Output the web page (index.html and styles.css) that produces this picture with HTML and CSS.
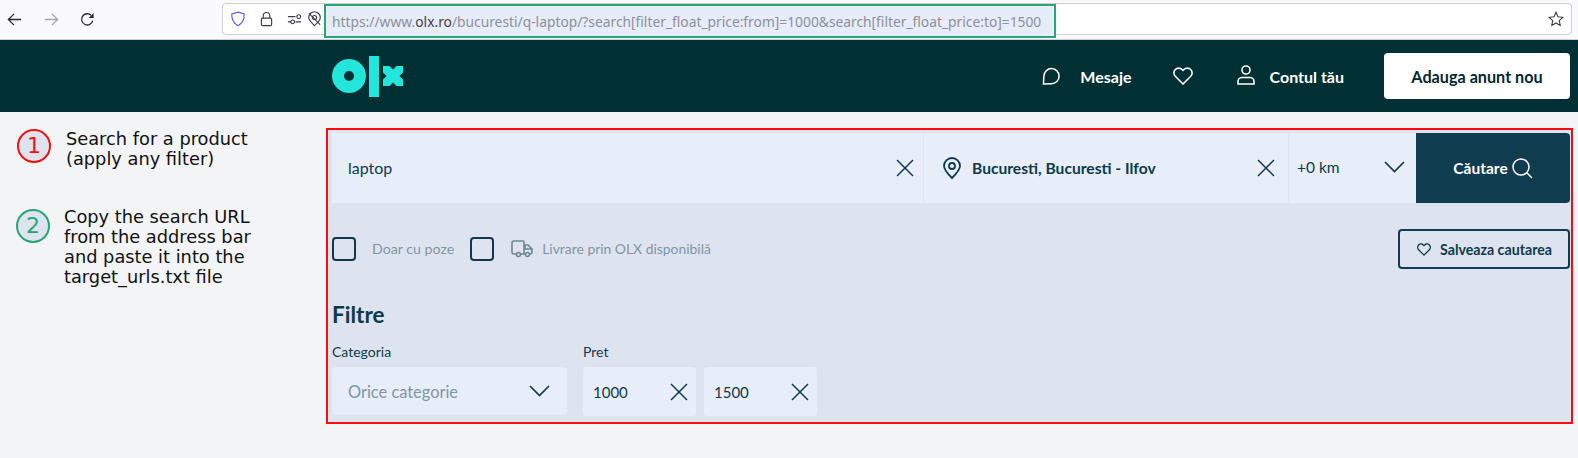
FILE: index.html
```html
<!DOCTYPE html>
<html lang="ro">
<head>
<meta charset="utf-8">
<title>OLX search</title>
<link rel="stylesheet" href="styles.css">
</head>
<body>
<div class="toolbar">
  <div class="nav">
    <svg class="nav-icon" viewBox="0 0 16 16"><path d="M15 8H1.500M7.500 2 1.500 8l6 6"/></svg>
    <svg class="nav-icon off" viewBox="0 0 16 16"><path d="M1 8h13.500M8.500 2l6 6-6 6"/></svg>
    <svg class="nav-icon" viewBox="0 0 16 16"><path d="M13.600 9.200A6 6 0 1 1 12 3.600"/><path class="solid" d="M14.500 1v5.400H9.200z"/></svg>
  </div>
  <div class="address">
    <div class="addr-icons">
      <svg class="ai shield" viewBox="0 0 16 16"><path d="M8 1.200 14.200 3c.2 5.600-2 9.500-6.200 11.800C3.800 12.500 1.600 8.600 1.800 3z"/></svg>
      <svg class="ai lock" viewBox="0 0 16 16"><path d="M4.500 7V4.500a3.500 3.500 0 0 1 7 0V7"/><rect x="2.500" y="7" width="11" height="8" rx="1.500"/></svg>
      <svg class="ai perm" viewBox="0 0 16 16"><path d="M1 5.500h8M1 11h3M9 11h6"/><circle cx="12.500" cy="5.500" r="2"/><circle cx="6" cy="11" r="2"/></svg>
      <svg class="ai pin" viewBox="0 0 16 16"><path d="M8 15C4 11.500 1.800 8.800 1.800 6.500a6.200 6.200 0 0 1 12.400 0C14.200 8.800 12 11.500 8 15z"/><circle cx="8" cy="6.500" r="2.200"/><path d="M2 2l12 12"/></svg>
    </div>
    <div class="url">https://www.<b>olx.ro</b>/bucuresti/q-laptop/?search[filter_float_price:from]=1000&amp;search[filter_float_price:to]=1500</div>
    <svg class="star" viewBox="0 0 16 16"><path d="M8 1.300l2 4.400 4.800.6-3.500 3.300.9 4.800L8 12l-4.200 2.400.9-4.800L1.200 6.300 6 5.700z"/></svg>
  </div>
</div>

<header class="site-header">
  <svg class="logo" viewBox="0 0 71 41"><path class="logo-o" fill-rule="evenodd" d="M17 3a17 17 0 1 0 0 34 17 17 0 0 0 0-34zm0 12a5 5 0 1 1 0 10 5 5 0 0 1 0-10z"/><rect class="logo-o" x="37" y="0" width="10" height="41"/><path class="logo-o" d="M51 10h6.500l3.500 3.500L64.500 10H71v6.500L67.500 20l3.500 3.500V30h-6.500L61 26.500 57.500 30H51v-6.500l3.500-3.500-3.500-3.500z"/></svg>
  <nav class="head-nav">
    <svg class="h-icon msg" viewBox="0 0 20 20"><path d="M1.500 18.500 2 10a8 8 0 1 1 8 8.200z"/></svg>
    <span class="h-link mesaje">Mesaje</span>
    <svg class="h-icon heart" viewBox="0 0 20 18"><path d="M10 17 2.300 9.300a4.800 4.800 0 0 1 0-6.800 4.800 4.800 0 0 1 6.800 0l.9.9.9-.9a4.800 4.800 0 0 1 6.800 0 4.800 4.800 0 0 1 0 6.800z"/></svg>
    <svg class="h-icon person" viewBox="0 0 18 20"><circle cx="9" cy="5" r="4"/><path d="M1 19v-2.500c0-2.500 2-4 4-4h8c2 0 4 1.500 4 4V19z"/></svg>
    <span class="h-link">Contul tău</span>
    <span class="post-btn">Adauga anunt nou</span>
  </nav>
</header>

<main class="content">
  <aside class="steps">
    <div class="step step-one">
      <span class="badge red">1</span>
      <p>Search for a product<br>(apply any filter)</p>
    </div>
    <div class="step step-two">
      <span class="badge green">2</span>
      <p>Copy the search URL<br>from the address bar<br>and paste it into the<br>target_urls.txt file</p>
    </div>
  </aside>

  <section class="panel">
    <div class="search-row">
      <div class="field f-query">
        <span class="q-text">laptop</span>
        <svg class="x" viewBox="0 0 18 18"><path d="M1 1l16 16M17 1 1 17"/></svg>
      </div>
      <div class="field f-loc">
        <svg class="loc-pin" viewBox="0 0 18 22"><path d="M9 21C4 16 1 12.500 1 9a8 8 0 0 1 16 0c0 3.500-3 7-8 12z"/><circle cx="9" cy="9" r="3"/></svg>
        <span class="loc-text">Bucuresti, Bucuresti - Ilfov</span>
        <svg class="x" viewBox="0 0 18 18"><path d="M1 1l16 16M17 1 1 17"/></svg>
      </div>
      <div class="field f-km">
        <span class="km-text">+0 km</span>
        <svg class="chev" viewBox="0 0 21 12"><path d="M1 1l9.500 9.500L20 1"/></svg>
      </div>
      <div class="search-btn">
        <span>Căutare</span>
        <svg class="mag" viewBox="0 0 21 21"><circle cx="9" cy="9" r="8"/><path d="M14.800 14.800 20 20"/></svg>
      </div>
    </div>

    <div class="check-row">
      <span class="box"></span>
      <span class="check-label first">Doar cu poze</span>
      <span class="box"></span>
      <svg class="truck" viewBox="0 0 22 18"><path d="M6 14H3a2 2 0 0 1-2-2V3a2 2 0 0 1 2-2h9a1 1 0 0 1 1 1v12H9M13 5h4l4 4v3a2 2 0 0 1-2 2h-1M15 14h-2M14 5v4h7"/><circle cx="7.500" cy="14.500" r="2"/><circle cx="16.500" cy="14.500" r="2"/></svg>
      <span class="check-label">Livrare prin OLX disponibilă</span>
      <span class="save-btn">
        <svg class="save-heart" viewBox="0 0 20 18"><path d="M10 17 2.300 9.300a4.800 4.800 0 0 1 0-6.800 4.800 4.800 0 0 1 6.800 0l.9.9.9-.9a4.800 4.800 0 0 1 6.800 0 4.800 4.800 0 0 1 0 6.800z"/></svg>
        Salveaza cautarea
      </span>
    </div>

    <h2 class="filters-title">Filtre</h2>

    <div class="filters">
      <div class="filter-cat">
        <div class="f-label">Categoria</div>
        <div class="select">
          <span>Orice categorie</span>
          <svg class="chev small" viewBox="0 0 21 12"><path d="M1 1l9.500 9.500L20 1"/></svg>
        </div>
      </div>
      <div class="filter-price">
        <div class="f-label">Pret</div>
        <div class="price-pair">
          <div class="price"><span>1000</span><svg class="x" viewBox="0 0 18 18"><path d="M1 1l16 16M17 1 1 17"/></svg></div>
          <div class="price"><span>1500</span><svg class="x" viewBox="0 0 18 18"><path d="M1 1l16 16M17 1 1 17"/></svg></div>
        </div>
      </div>
    </div>
  </section>
</main>
</body>
</html>
```

FILE: styles.css
```css
* { box-sizing: border-box; }
html, body { margin: 0; padding: 0; }
body {
  width: 1578px;
  height: 458px;
  overflow: hidden;
  background: #f3f4f6;
  font-family: "Lato", "Liberation Sans", sans-serif;
  color: #0e3a4b;
}
svg { display: block; fill: none; stroke: currentColor; }

.toolbar {
  height: 40px;
  display: flex;
  background: #f9f9fb;
  border-bottom: 1px solid #cfcfd4;
}
.nav { display: flex; width: 222px; padding: 12px 0 0 7px; gap: 21.500px; }
.nav-icon { width: 15px; height: 15px; color: #2b2a33; stroke-width: 1.4; }
.nav-icon.off { color: #a3a3a8; }
.nav-icon .solid { fill: currentColor; stroke: none; }
.address {
  width: 1350px;
  height: 32px;
  margin-top: 3px;
  display: flex;
  background: #fff;
  border: 1px solid #cfcfd4;
  border-radius: 4px;
}
.addr-icons { display: flex; width: 101px; padding: 7px 0 0 7px; color: #3b3b44; }
.ai { width: 15px; height: 16px; stroke-width: 1.2; }
.shield { color: #5a5ff0; margin-right: 13px; width: 16px; }
.lock { margin-right: 13px; }
.perm { margin-right: 5px; }
.url {
  width: 732px;
  height: 34px;
  flex: none;
  border: 2px solid #27a673;
  background: #e7ecf9;
  color: #8c9099;
  font: 13.800px/31px "Noto Sans", sans-serif;
  padding-left: 6px;
  white-space: nowrap;
  overflow: hidden;
  position: relative;
  z-index: 1;
}
.url b { font-weight: 400; color: #3f414a; }
.star { width: 16px; height: 16px; margin: 7px 7px 0 auto; color: #3b3b44; stroke-width: 1.1; }

.site-header {
  height: 72px;
  background: #003034;
  display: flex;
  align-items: center;
  padding-left: 332px;
  padding-right: 8px;
  justify-content: space-between;
}
.logo { width: 71px; height: 41px; stroke: none; }
.logo-o { fill: #23e5db; stroke: none; }
.head-nav { display: flex; align-items: center; color: #fff; }
.h-icon { stroke-width: 1.6; color: #fff; }
.msg { width: 19px; height: 20px; margin-right: 19px; }
.h-link { font-size: 16px; font-weight: 700; }
.mesaje { margin-right: 41px; }
.heart { width: 20px; height: 18px; margin-right: 44px; }
.person { width: 18px; height: 20px; margin-right: 15px; margin-top: -2px; }
.post-btn {
  width: 186px;
  height: 46px;
  margin-left: 40px;
  background: #fff;
  color: #02282f;
  border-radius: 4px;
  font-size: 16.200px;
  font-weight: 700;
  display: flex;
  align-items: center;
  justify-content: center;
}

.content { display: flex; height: 312px; padding-top: 16px; }
.steps { width: 326px; flex: none; color: #111; font-family: "DejaVu Sans", sans-serif; font-size: 17.800px; line-height: 20px; }
.step { display: flex; }
.step p { margin: 0; }
.step-one { padding: 0 0 0 17px; margin-top: 1px; }
.step-one p { margin-left: 15px; }
.step-two { padding: 0 0 0 16px; margin-top: 40px; }
.step-two p { margin: -2px 0 0 14px; }
.badge {
  width: 34px;
  height: 34px;
  flex: none;
  border-radius: 50%;
  background: #dee4ef;
  border: 2px solid;
  display: flex;
  align-items: center;
  justify-content: center;
  font-size: 22px;
}
.badge.red { color: #f60f0f; }
.badge.green { color: #27a673; }

.panel {
  width: 1247px;
  height: 296px;
  background: #dee4ef;
  border: 2px solid #fa0a0a;
  padding: 3px 1px 0 4px;
}
.search-row { display: flex; height: 70px; }
.field { background: #e7eef9; display: flex; align-items: center; }
.f-query { width: 592px; padding: 0 9px 2px 16px; justify-content: space-between; border-right: 1px solid #dde5f1; font-size: 16px; }
.f-query .x { margin-top: 2px; }
.x { width: 18px; height: 18px; stroke-width: 1.5; color: #12384a; }
.f-loc { width: 365px; padding: 0 13px 0 19px; border-right: 1px solid #dde5f1; }
.loc-pin { width: 18px; height: 22px; stroke-width: 1.8; margin-right: 11px; }
.loc-text { font-size: 15.600px; font-weight: 700; flex: 1; }
.f-km { width: 127px; padding: 0 11px 2px 8px; justify-content: space-between; font-size: 15.500px; }
.chev { width: 21px; height: 12px; stroke-width: 1.7; color: #12384a; }
.search-btn {
  width: 154px;
  background: #0f3c4e;
  color: #fff;
  border-radius: 0 4px 4px 0;
  display: flex;
  align-items: center;
  justify-content: center;
  gap: 4px;
  font-size: 15.500px;
  font-weight: 700;
}
.mag { width: 21px; height: 21px; stroke-width: 1.5; }

.check-row { display: flex; align-items: center; height: 40px; margin-top: 26px; }
.box { width: 24px; height: 24px; border: 2px solid #12394b; border-radius: 4px; }
.check-label { font-size: 13.900px; color: #7f96a3; margin-top: -1px; }
.check-label.first { font-size: 14.200px; margin: -1px 16px 0 16px; }
.truck { width: 22px; height: 18px; margin: 0 9px 0 17px; color: #6f8792; stroke-width: 1.6; }
.save-btn {
  width: 172px;
  height: 40px;
  margin-left: auto;
  border: 2px solid #0f3c4e;
  border-radius: 4px;
  font-size: 14.200px;
  font-weight: 700;
  display: flex;
  align-items: center;
  padding-left: 17px;
  gap: 9px;
}
.save-heart { width: 14px; height: 13px; stroke-width: 1.8; }

.filters-title { margin: 31px 0 0 0; font-size: 22.500px; line-height: 30px; font-weight: 700; }
.filters { display: flex; margin-top: 13px; }
.filter-cat { width: 235px; margin-right: 16px; }
.f-label { font-size: 14px; line-height: 17px; margin-bottom: 7px; }
.select {
  height: 48px;
  background: #e7eef9;
  border-radius: 4px;
  display: flex;
  align-items: center;
  justify-content: space-between;
  padding: 0 17px 0 16px;
  color: #7f96a3;
  font-size: 16.400px;
}
.chev.small { width: 21px; height: 12px; }
.price-pair { display: flex; gap: 8px; }
.price {
  width: 113px;
  height: 49px;
  background: #e7eef9;
  border-radius: 4px;
  display: flex;
  align-items: center;
  justify-content: space-between;
  padding: 0 8px 0 10px;
  font-size: 15px;
}
```
